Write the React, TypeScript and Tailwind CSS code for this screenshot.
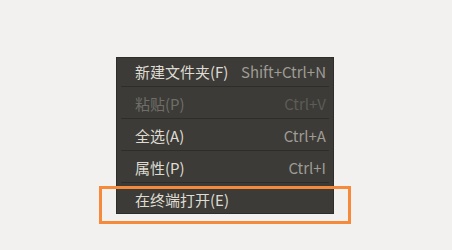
const items = [
  { label: '新建文件夹(F)', accel: 'Shift+Ctrl+N', disabled: false },
  { label: '粘贴(P)', accel: 'Ctrl+V', disabled: true },
  { label: '全选(A)', accel: 'Ctrl+A', disabled: false },
  { label: '属性(P)', accel: 'Ctrl+I', disabled: false },
  { label: '在终端打开(E)', accel: '', disabled: false },
];

export default function App() {
  return (
    <div
      className="relative w-[452px] h-[250px] bg-[#f2f1f0] overflow-hidden"
      style={{ fontFamily: '"Noto Sans CJK SC", "Noto Sans", sans-serif' }}
    >
      <div className="pt-[57px] pl-[116px]">
        <div className="w-[218px] bg-[#3c3b37] border border-[#2e2d2a] text-[15px]">
          {items.map((item, i) => (
            <div key={i}>
              <div
                className={`flex items-center justify-between pl-[18px] pr-[7px] ${
                  i === items.length - 1 ? 'h-[27px] pt-[1px]' : 'h-[28px]'
                }`}
              >
                <span className={item.disabled ? 'text-[#6f6e68]' : 'text-[#dfdbd2]'}>{item.label}</span>
                <span className={item.disabled ? 'text-[#5d5c57]' : 'text-[#9f9c95]'}>{item.accel}</span>
              </div>
              {i < items.length - 1 && (
                <div className="mx-[4px] h-[1px] bg-[#2e2d2a] mb-[3px]" />
              )}
            </div>
          ))}
        </div>
      </div>
      <div className="absolute left-[99px] top-[186px] w-[252px] h-[38px] border-[3px] border-[#f68a3b]" />
    </div>
  );
}
